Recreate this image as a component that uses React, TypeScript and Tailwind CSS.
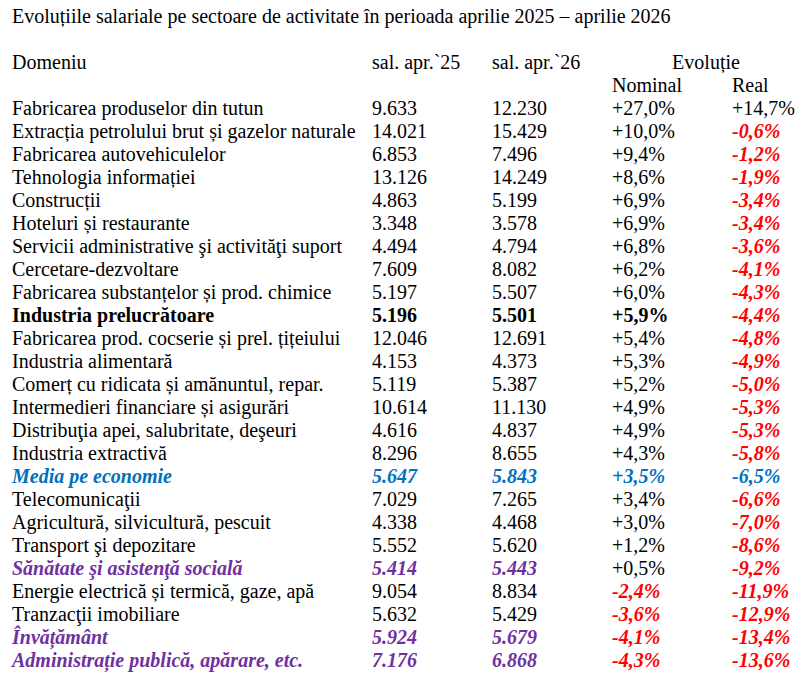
import React from "react";

type Tone = "normal" | "bold" | "blue" | "purple";

interface Row {
  name: string;
  s25: string;
  s26: string;
  nom: string;
  real: string;
  tone: Tone;
}

const rows: Row[] = [
  { name: "Fabricarea produselor din tutun", s25: "9.633", s26: "12.230", nom: "+27,0%", real: "+14,7%", tone: "normal" },
  { name: "Extracția petrolului brut și gazelor naturale", s25: "14.021", s26: "15.429", nom: "+10,0%", real: "-0,6%", tone: "normal" },
  { name: "Fabricarea autovehiculelor", s25: "6.853", s26: "7.496", nom: "+9,4%", real: "-1,2%", tone: "normal" },
  { name: "Tehnologia informației", s25: "13.126", s26: "14.249", nom: "+8,6%", real: "-1,9%", tone: "normal" },
  { name: "Construcții", s25: "4.863", s26: "5.199", nom: "+6,9%", real: "-3,4%", tone: "normal" },
  { name: "Hoteluri și restaurante", s25: "3.348", s26: "3.578", nom: "+6,9%", real: "-3,4%", tone: "normal" },
  { name: "Servicii administrative şi activităţi suport", s25: "4.494", s26: "4.794", nom: "+6,8%", real: "-3,6%", tone: "normal" },
  { name: "Cercetare-dezvoltare", s25: "7.609", s26: "8.082", nom: "+6,2%", real: "-4,1%", tone: "normal" },
  { name: "Fabricarea substanțelor și prod. chimice", s25: "5.197", s26: "5.507", nom: "+6,0%", real: "-4,3%", tone: "normal" },
  { name: "Industria prelucrătoare", s25: "5.196", s26: "5.501", nom: "+5,9%", real: "-4,4%", tone: "bold" },
  { name: "Fabricarea prod. cocserie și prel. țițeiului", s25: "12.046", s26: "12.691", nom: "+5,4%", real: "-4,8%", tone: "normal" },
  { name: "Industria alimentară", s25: "4.153", s26: "4.373", nom: "+5,3%", real: "-4,9%", tone: "normal" },
  { name: "Comerț cu ridicata și amănuntul, repar.", s25: "5.119", s26: "5.387", nom: "+5,2%", real: "-5,0%", tone: "normal" },
  { name: "Intermedieri financiare și asigurări", s25: "10.614", s26: "11.130", nom: "+4,9%", real: "-5,3%", tone: "normal" },
  { name: "Distribuţia apei, salubritate, deşeuri", s25: "4.616", s26: "4.837", nom: "+4,9%", real: "-5,3%", tone: "normal" },
  { name: "Industria extractivă", s25: "8.296", s26: "8.655", nom: "+4,3%", real: "-5,8%", tone: "normal" },
  { name: "Media pe economie", s25: "5.647", s26: "5.843", nom: "+3,5%", real: "-6,5%", tone: "blue" },
  { name: "Telecomunicaţii", s25: "7.029", s26: "7.265", nom: "+3,4%", real: "-6,6%", tone: "normal" },
  { name: "Agricultură, silvicultură, pescuit", s25: "4.338", s26: "4.468", nom: "+3,0%", real: "-7,0%", tone: "normal" },
  { name: "Transport şi depozitare", s25: "5.552", s26: "5.620", nom: "+1,2%", real: "-8,6%", tone: "normal" },
  { name: "Sănătate şi asistenţă socială", s25: "5.414", s26: "5.443", nom: "+0,5%", real: "-9,2%", tone: "purple" },
  { name: "Energie electrică și termică, gaze, apă", s25: "9.054", s26: "8.834", nom: "-2,4%", real: "-11,9%", tone: "normal" },
  { name: "Tranzacţii imobiliare", s25: "5.632", s26: "5.429", nom: "-3,6%", real: "-12,9%", tone: "normal" },
  { name: "Învățământ", s25: "5.924", s26: "5.679", nom: "-4,1%", real: "-13,4%", tone: "purple" },
  { name: "Administrație publică, apărare, etc.", s25: "7.176", s26: "6.868", nom: "-4,3%", real: "-13,6%", tone: "purple" },
];

const neg = "font-bold italic text-[#ff0000]";

function toneClass(tone: Tone) {
  if (tone === "bold") return "font-bold";
  if (tone === "blue") return "font-bold italic text-[#0070c0]";
  if (tone === "purple") return "font-bold italic text-[#7030a0]";
  return "";
}

function pctClass(value: string, tone: Tone, isReal: boolean) {
  if (tone === "blue") return toneClass(tone);
  if (value.startsWith("-")) return neg;
  if (isReal) return "";
  if (tone === "bold") return "font-bold";
  return "";
}

export default function App() {
  return (
    <div className="w-[802px] h-[678px] bg-white text-black text-[20px] leading-[23px] pt-[5px] pl-[12px] font-['Liberation_Serif',serif]">
      <div className="h-[46px] whitespace-nowrap">
        Evoluțiile salariale pe sectoare de activitate în perioada aprilie 2025 – aprilie 2026
      </div>
      <div className="grid grid-cols-[360px_120px_120px_120px_68px]">
        <div>Domeniu</div>
        <div>sal. apr.`25</div>
        <div>sal. apr.`26</div>
        <div className="col-span-2 text-center">Evoluție</div>

        <div />
        <div />
        <div />
        <div>Nominal</div>
        <div>Real</div>

        {rows.map((r, i) => (
          <React.Fragment key={i}>
            <div className={`whitespace-nowrap ${toneClass(r.tone)}`}>{r.name}</div>
            <div className={toneClass(r.tone)}>{r.s25}</div>
            <div className={toneClass(r.tone)}>{r.s26}</div>
            <div className={`whitespace-nowrap ${pctClass(r.nom, r.tone, false)}`}>{r.nom}</div>
            <div className={`whitespace-nowrap ${pctClass(r.real, r.tone, true)}`}>{r.real}</div>
          </React.Fragment>
        ))}
      </div>
    </div>
  );
}
